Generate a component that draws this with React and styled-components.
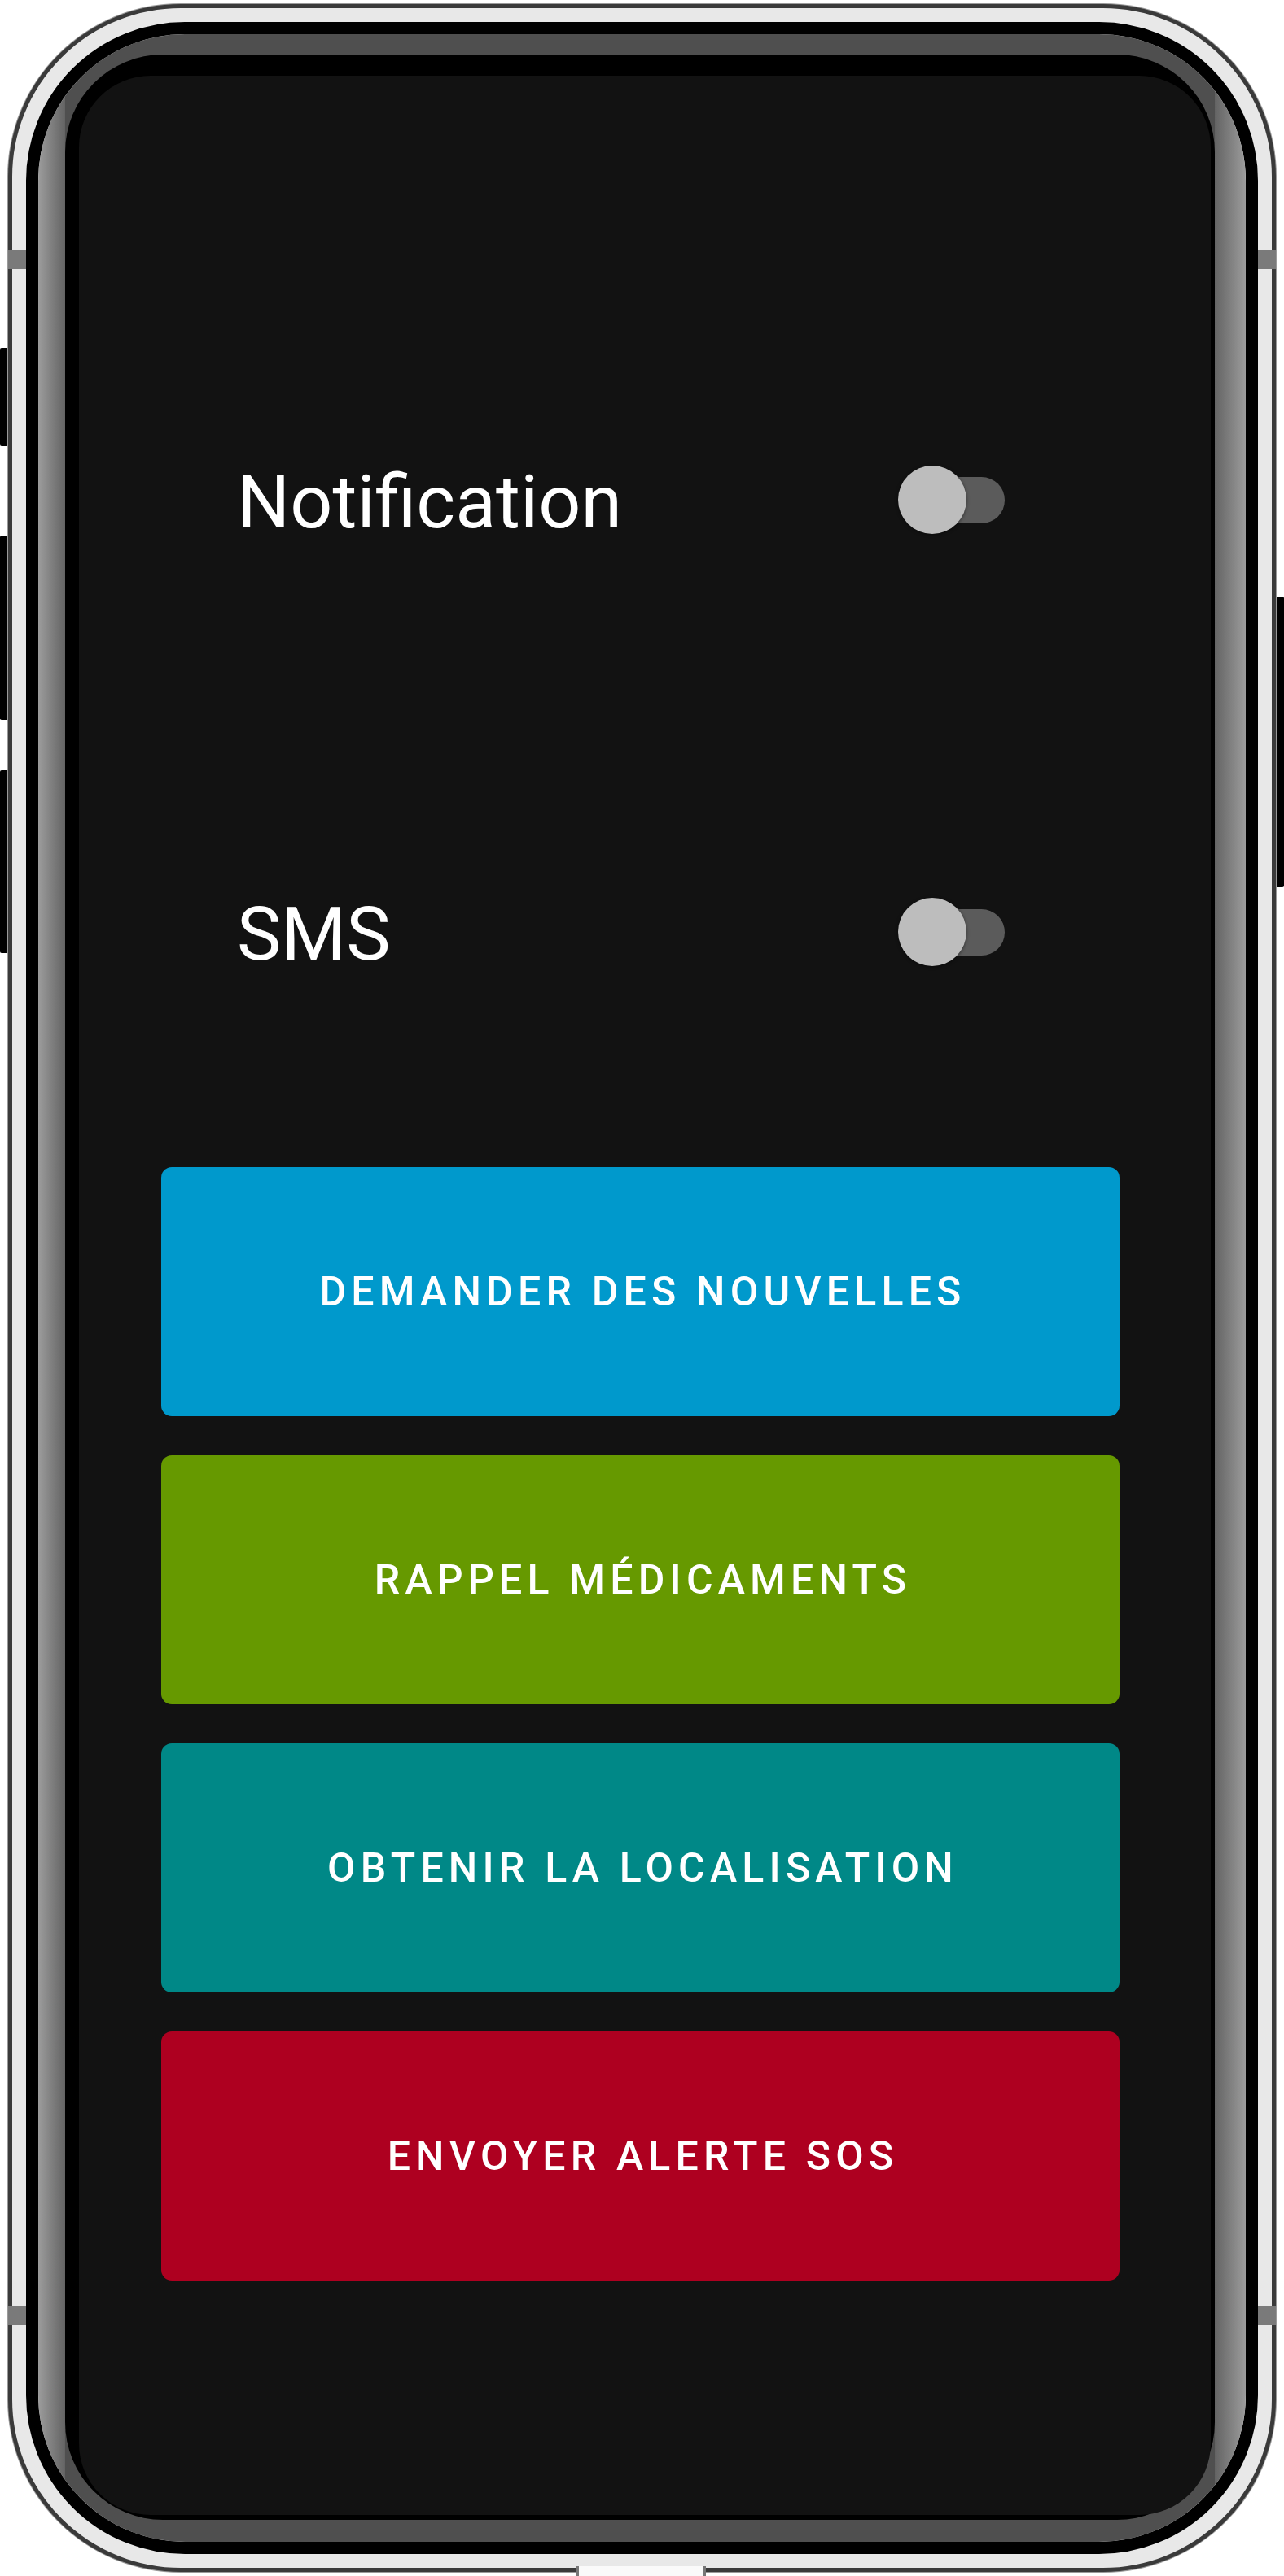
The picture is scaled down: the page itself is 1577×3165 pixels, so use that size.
import React from "react";
import styled, { createGlobalStyle } from "styled-components";

const GlobalStyle = createGlobalStyle`
  html, body {
    margin: 0;
    padding: 0;
    background: #ffffff;
  }
  body {
    font-family: Roboto, "Noto Sans", "Liberation Sans", sans-serif;
  }
  * { box-sizing: border-box; }
`;

const Page = styled.div`
  position: relative;
  display: flex;
  align-items: flex-start;
  width: 1577px;
  height: 3165px;
  overflow: hidden;
  background: #ffffff;
`;

const KeyRail = styled.div`
  display: flex;
  flex-direction: column;
  width: 10px;
  flex-shrink: 0;
  padding-top: ${(p) => p.$start}px;
`;

const SideKey = styled.div`
  width: 10px;
  height: ${(p) => p.$h}px;
  margin-top: ${(p) => p.$mt || 0}px;
  background: #000;
  border-radius: ${(p) => (p.$side === "left" ? "2px 0 0 2px" : "0 2px 2px 0")};
`;

const Phone = styled.div`
  position: relative;
  flex-shrink: 0;
  margin-top: 5px;
  width: 1557px;
  height: 3155px;
  border: 5px solid #3a3a3a;
  border-radius: 212px;
  background: #e8e8e8;
  padding: 17px;
  box-shadow: 0 0 0 1px #9a9a9a;
`;

const BlackRing = styled.div`
  height: 100%;
  border: 15px solid #000;
  border-radius: 195px;
  overflow: hidden;
`;

const MetalRing = styled.div`
  height: 100%;
  padding: 25px 38px 27px 33px;
  background: linear-gradient(
    90deg,
    #9c9c9c 0px,
    #636363 33px,
    #4f4f4f 33px,
    #4f4f4f calc(100% - 38px),
    #636363 calc(100% - 38px),
    #9c9c9c 100%
  );
`;

const InnerBezel = styled.div`
  height: 100%;
  padding: 26px 5px 6px 17px;
  background: #000;
  border-radius: 120px;
`;

const Screen = styled.div`
  height: 100%;
  background: #121212;
  border-radius: 88px;
  display: flex;
  flex-direction: column;
  padding-top: 424px;
  overflow: hidden;
`;

const Settings = styled.div`
  display: flex;
  flex-direction: column;
  gap: 331px;
`;

const SettingRow = styled.div`
  display: flex;
  align-items: center;
  height: 200px;
  padding: 0 253px 0 194px;
`;

const Label = styled.span`
  font-family: Roboto, "Noto Sans", sans-serif;
  font-size: 91.5px;
  font-weight: 400;
  line-height: 1.172;
  color: #ffffff;
`;

const SwitchRoot = styled.div`
  position: relative;
  margin-left: auto;
  margin-top: -6px;
  width: 131px;
  height: 84px;
  flex-shrink: 0;
`;

const Track = styled.div`
  position: absolute;
  right: 0;
  top: 14px;
  width: 114px;
  height: 57px;
  border-radius: 29px;
  background: #5b5b5b;
`;

const Thumb = styled.div`
  position: absolute;
  left: 0;
  top: 0;
  width: 84px;
  height: 84px;
  border-radius: 50%;
  background: #bdbdbd;
  box-shadow: 0 1px 4px rgba(0, 0, 0, 0.45);
`;

const ActionList = styled.div`
  display: flex;
  flex-direction: column;
  gap: 48px;
  margin-top: 186px;
  padding: 0 112px 0 101px;
`;

const ActionButton = styled.button`
  display: flex;
  align-items: center;
  justify-content: center;
  height: 306px;
  width: 100%;
  border: none;
  border-radius: 13px;
  background: ${(p) => p.$color};
  color: #ffffff;
  font-family: Roboto, "Noto Sans", sans-serif;
  font-size: 50px;
  font-weight: 500;
  line-height: 1;
  letter-spacing: 6.2px;
  padding: 0 0 0 6px;
  text-transform: uppercase;
  cursor: pointer;
`;

const AntennaLine = styled.div`
  position: absolute;
  ${(p) => (p.$side === "left" ? "left: -5px;" : "right: -5px;")}
  top: ${(p) => p.$top}px;
  width: 22px;
  height: 23px;
  background: #7a7a7a;
`;

const Port = styled.div`
  position: absolute;
  left: 693px;
  bottom: -10px;
  width: 159px;
  height: 12px;
  background: #fafafa;
  border-left: 3px solid #777;
  border-right: 3px solid #777;
`;

function Toggle() {
  return (
    <SwitchRoot role="switch" aria-checked="false">
      <Track />
      <Thumb />
    </SwitchRoot>
  );
}

const actions = [
  { label: "Demander des nouvelles", color: "#0099cc" },
  { label: "Rappel médicaments", color: "#669900" },
  { label: "Obtenir la localisation", color: "#008887" },
  { label: "Envoyer alerte SOS", color: "#ae0020" },
];

export default function App() {
  return (
    <>
      <GlobalStyle />
      <Page>
        <KeyRail $start={428}>
          <SideKey $side="left" $h={120} />
          <SideKey $side="left" $h={227} $mt={110} />
          <SideKey $side="left" $h={225} $mt={61} />
        </KeyRail>
        <Phone>
          <BlackRing>
            <MetalRing>
              <InnerBezel>
                <Screen>
                  <Settings>
                    <SettingRow>
                      <Label>Notification</Label>
                      <Toggle />
                    </SettingRow>
                    <SettingRow>
                      <Label>SMS</Label>
                      <Toggle />
                    </SettingRow>
                  </Settings>
                  <ActionList>
                    {actions.map((a) => (
                      <ActionButton key={a.label} $color={a.color}>
                        {a.label}
                      </ActionButton>
                    ))}
                  </ActionList>
                </Screen>
              </InnerBezel>
            </MetalRing>
          </BlackRing>
          <AntennaLine $side="left" $top={297} />
          <AntennaLine $side="left" $top={2823} />
          <AntennaLine $side="right" $top={297} />
          <AntennaLine $side="right" $top={2823} />
          <Port />
        </Phone>
        <KeyRail $start={733}>
          <SideKey $side="right" $h={357} />
        </KeyRail>
      </Page>
    </>
  );
}
